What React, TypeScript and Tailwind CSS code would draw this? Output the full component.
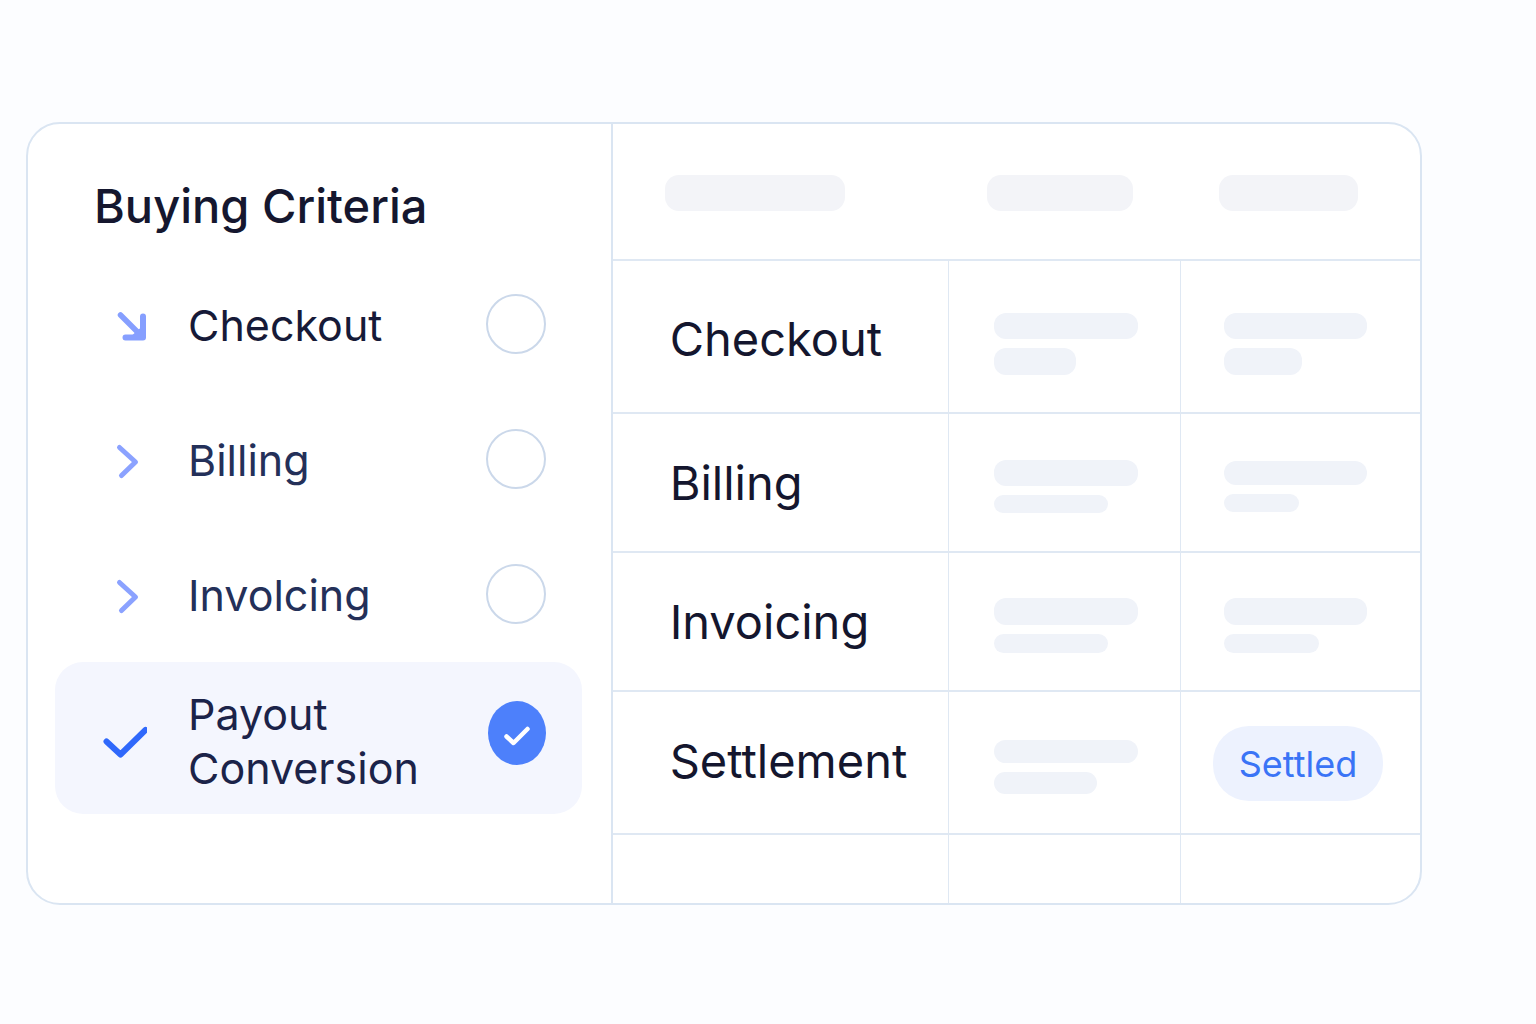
import { useState } from "react";

const criteria = [
  { id: "checkout", label: "Checkout", icon: "arrow", color: "text-[#161a38]" },
  { id: "billing", label: "Billing", icon: "chevron", color: "text-[#243059]" },
  { id: "involcing", label: "Involcing", icon: "chevron", color: "text-[#243059]" },
  { id: "payout", label: "Payout Conversion", icon: "check", color: "text-[#1b2349]" },
];

const rows = [
  {
    name: "Checkout",
    height: "h-[153px]",
    pad: "pt-3.5",
    text: "pt-1",
    a: ["h-[26px] w-36", "h-[27px] w-[82px]"],
    b: ["h-[26px] w-[143px]", "h-[27px] w-[78px]"],
  },
  {
    name: "Billing",
    height: "h-[139px]",
    pad: "pt-2",
    text: "",
    a: ["h-[26px] w-36", "h-[18px] w-[114px]"],
    b: ["h-[24px] w-[143px]", "h-[18px] w-[75px]"],
  },
  {
    name: "Invoicing",
    height: "h-[139px]",
    pad: "pt-2",
    text: "",
    a: ["h-[27px] w-36", "h-[19px] w-[114px]"],
    b: ["h-[27px] w-[143px]", "h-[19px] w-[95px]"],
  },
  {
    name: "Settlement",
    height: "h-[143px]",
    pad: "pt-2",
    text: "pb-1",
    a: ["h-[23px] w-36", "h-[22px] w-[103px]"],
    b: null,
  },
];

function CriterionIcon({ kind }: { kind: string }) {
  if (kind === "arrow") {
    return (
      <svg className="shrink-0" width="44" height="44" viewBox="0 0 44 44" fill="none" stroke="#869fff" strokeLinecap="round" strokeLinejoin="round" aria-hidden="true">
        <path d="M17.500 12 38 32.500" strokeWidth="5.500" />
        <path d="M40 13.500V34.500H22.500" strokeWidth="6" />
        <path d="M37 27v5.500h-6z" fill="#869fff" strokeWidth="3" />
      </svg>
    );
  }
  if (kind === "chevron") {
    return (
      <svg className="shrink-0" width="44" height="44" viewBox="0 0 44 44" fill="none" stroke="#8ba2ff" strokeWidth="5" strokeLinecap="round" strokeLinejoin="round" aria-hidden="true">
        <path d="M16.500 9.500 32.500 24 18.500 37.500" />
      </svg>
    );
  }
  return (
    <svg className="shrink-0" width="44" height="44" viewBox="0 0 44 44" fill="none" aria-hidden="true">
      <path d="M3.500 25.500 17.500 38.500 42.500 14" stroke="#2f68fb" strokeWidth="6" strokeLinecap="round" strokeLinejoin="round" />
    </svg>
  );
}

function Bars({ sizes }: { sizes: string[] }) {
  return (
    <div className="flex flex-col gap-[9px]">
      {sizes.map((size, i) => (
        <div key={i} className={`rounded-xl bg-[#f0f3f9] ${size}`} />
      ))}
    </div>
  );
}

export default function App() {
  const [selected, setSelected] = useState("payout");

  return (
    <main className="min-h-screen bg-[#fcfdff] pt-[122px] pr-[114px] pb-[118px] pl-[26px] font-['Inter',sans-serif]">
      <div className="flex overflow-hidden rounded-[34px] border-2 border-[#dae5f2] bg-white">
        <section className="w-[42%] shrink-0 border-r-2 border-[#dae5f2] pt-[54px] pr-[29px] pl-[27px]">
          <h2 id="criteria-title" className="pl-[39px] text-[47px] leading-[56px] font-[450] text-[#15172f]">
            Buying Criteria
          </h2>
          <div role="radiogroup" aria-labelledby="criteria-title" className="pt-[23px]">
            {criteria.map((item) => {
              const on = item.id === selected;
              return (
                <label
                  key={item.id}
                  className={`flex cursor-pointer items-center rounded-[28px] pr-9 pl-12 ${
                    on ? "h-[152px] bg-[#f4f6fe]" : "h-[135px]"
                  }`}
                >
                  <CriterionIcon kind={item.icon} />
                  <span className={`ml-[41px] min-w-0 flex-1 text-[43px] leading-[54px] ${on ? "pt-1.5" : ""} ${item.color}`}>
                    {item.label}
                  </span>
                  <span className={`grid shrink-0 place-items-center ${on ? "pb-2.5" : "pb-0.5"}`}>
                    <input
                      type="radio"
                      name="criterion"
                      checked={on}
                      onChange={() => setSelected(item.id)}
                      className="col-start-1 row-start-1 h-[60px] w-[60px] appearance-none rounded-[50%] border-2 border-[#cbd8ea] checked:h-16 checked:w-[58px] checked:border-0 checked:bg-[#4d80fb]"
                    />
                    {on && (
                      <svg className="pointer-events-none col-start-1 row-start-1" width="28" height="28" viewBox="0 0 28 28" fill="none" aria-hidden="true">
                        <path d="M3.500 17.500 10.500 24 24.500 10" stroke="#fff" strokeWidth="4.500" strokeLinecap="round" strokeLinejoin="round" />
                      </svg>
                    )}
                  </span>
                </label>
              );
            })}
          </div>
        </section>

        <table className="min-w-0 flex-1 table-fixed border-separate border-spacing-0 text-left">
          <colgroup>
            <col className="w-[41.7%]" />
            <col className="w-[28.7%]" />
            <col />
          </colgroup>
          <thead>
            <tr className="h-[137px]">
              <th className="border-b-2 border-[#dfe8f3] pt-0.5 pl-[52px]">
                <div className="h-9 w-[180px] rounded-[14px] bg-[#f3f4f8]" />
              </th>
              <th className="border-b-2 border-[#dfe8f3] pt-0.5 pl-[38px]">
                <div className="h-9 w-[146px] rounded-[14px] bg-[#f3f4f8]" />
              </th>
              <th className="border-b-2 border-[#dfe8f3] pt-0.5 pl-[38px]">
                <div className="h-9 w-[139px] rounded-[14px] bg-[#f3f4f8]" />
              </th>
            </tr>
          </thead>
          <tbody>
            {rows.map((row) => (
              <tr key={row.name} className={row.height}>
                <th
                  scope="row"
                  className={`border-r border-b-2 border-[#dfe8f3] pl-[57px] text-[47px] leading-[56px] font-normal text-[#14162e] ${row.text}`}
                >
                  {row.name}
                </th>
                <td className={`border-r border-b-2 border-[#dfe8f3] pl-[45px] ${row.pad}`}>
                  <Bars sizes={row.a} />
                </td>
                {row.b ? (
                  <td className={`border-b-2 border-[#dfe8f3] pl-[43px] ${row.pad}`}>
                    <Bars sizes={row.b} />
                  </td>
                ) : (
                  <td className="border-b-2 border-[#dfe8f3] pt-0.5 pl-8">
                    <span className="flex h-[75px] w-[170px] items-center justify-center rounded-[36px] bg-[#edf2fe] text-[36px] leading-none text-[#3a74f6]">
                      Settled
                    </span>
                  </td>
                )}
              </tr>
            ))}
            <tr className="h-[68px]">
              <td className="border-r border-[#dfe8f3]" />
              <td className="border-r border-[#dfe8f3]" />
              <td />
            </tr>
          </tbody>
        </table>
      </div>
    </main>
  );
}
